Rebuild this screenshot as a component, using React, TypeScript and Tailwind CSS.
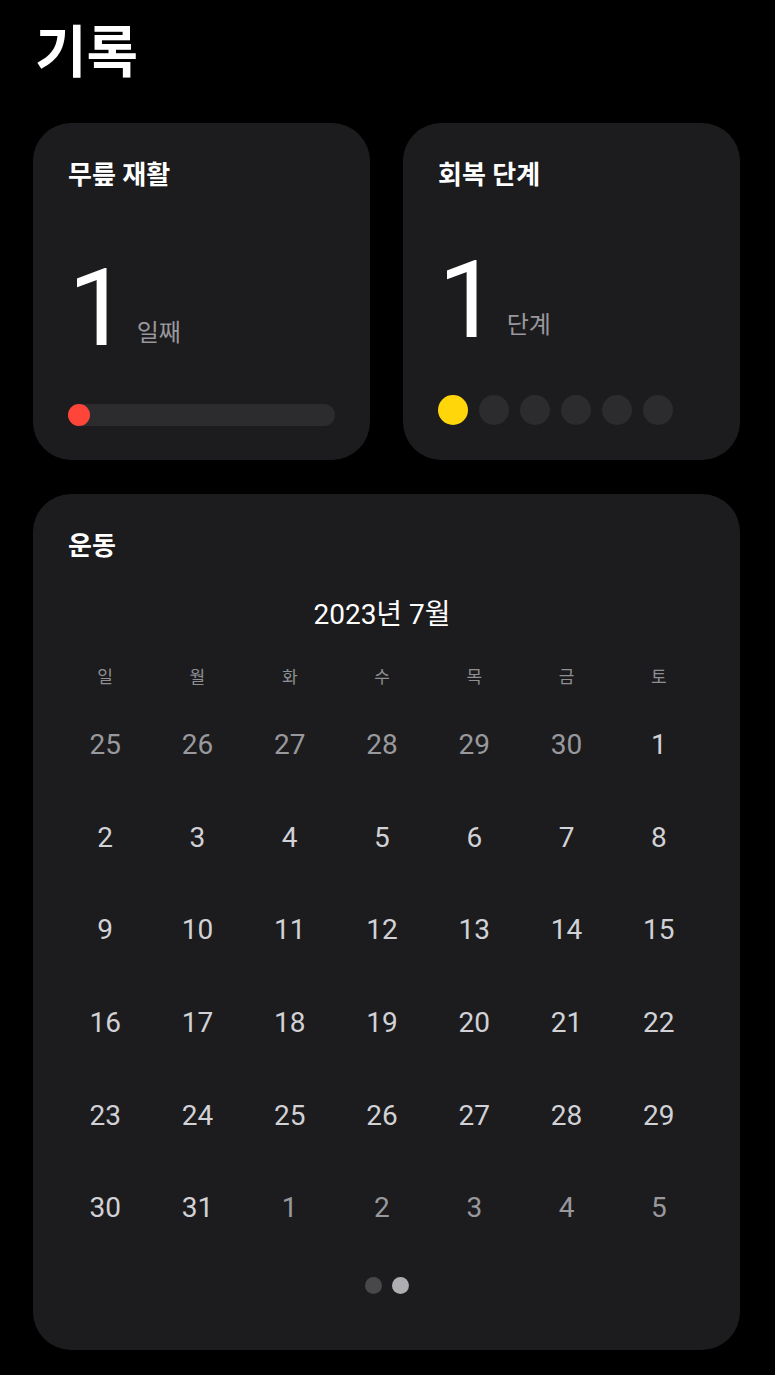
import React from 'react';

const FONT = "font-['Roboto','Noto_Sans_CJK_KR',sans-serif]";

const weekdays = ['일', '월', '화', '수', '목', '금', '토'];

// July 2023, padded with June / August days
const days: { n: number; cur: boolean }[] = [
    ...[25, 26, 27, 28, 29, 30].map(n => ({ n, cur: false })),
    ...Array.from({ length: 31 }, (_, i) => ({ n: i + 1, cur: true })),
    ...[1, 2, 3, 4, 5].map(n => ({ n, cur: false })),
];

function StatCard({ title, value, unit, valueGap, children }: {
    title: string;
    value: string;
    unit: string;
    valueGap: string;
    children: React.ReactNode;
}) {
    return (
        <div className="w-[337px] h-[337px] rounded-[38px] bg-[#1c1c1e] px-[35px] pt-[37px] flex flex-col">
            <div className="text-[26px] leading-[31px] font-bold text-white">{title}</div>
            <div className={`flex items-baseline ${valueGap}`}>
                <span className="text-[108px] leading-none font-normal text-white">{value}</span>
                <span className="relative -top-[4px] ml-[8px] text-[24px] text-[#98989d]">{unit}</span>
            </div>
            {children}
        </div>
    );
}

export default function App() {
    return (
        <div className={`w-[775px] min-h-[1375px] bg-black pl-[33px] pr-[35px] ${FONT}`}>
            <h1 className="pt-[25px] pl-[2px] text-[56px] leading-none font-bold text-white">기록</h1>

            <div className="mt-[42px] flex gap-[33px]">
                <StatCard title="무릎 재활" value="1" unit="일째" valueGap="mt-[63px]">
                    <div className="mt-[42px] h-[22px] rounded-full bg-[#2c2c2e]">
                        <div className="w-[22px] h-[22px] rounded-full bg-[#ff453a]" />
                    </div>
                </StatCard>
                <StatCard title="회복 단계" value="1" unit="단계" valueGap="mt-[55px]">
                    <div className="mt-[41px] flex gap-[11px]">
                        {[0, 1, 2, 3, 4, 5].map(i => (
                            <div
                                key={i}
                                className={i === 0 ? 'w-[30px] h-[30px] rounded-full bg-[#ffd60a]' : 'w-[30px] h-[30px] rounded-full bg-[#2c2c2e]'}
                            />
                        ))}
                    </div>
                </StatCard>
            </div>

            <div className="mt-[34px] rounded-[38px] bg-[#1c1c1e] pt-[37px] pb-[56px]">
                <div className="px-[35px] text-[26px] leading-[31px] font-bold text-white">운동</div>

                <div className="pl-[26px] pr-[35px]">
                    <div className="mt-[33px] h-[40px] flex items-center justify-center text-[28px] text-white">
                        2023년 7월
                    </div>

                    <div className="mt-[22px] grid grid-cols-7">
                        {weekdays.map(d => (
                            <div key={d} className="h-[42px] flex items-center justify-center text-[17px] text-[#8e8e93]">
                                {d}
                            </div>
                        ))}
                        {days.map((d, i) => (
                            <div
                                key={i}
                                className={d.cur
                                    ? 'h-[92.6px] flex items-center justify-center text-[28px] text-[#d1d1d6]'
                                    : 'h-[92.6px] flex items-center justify-center text-[28px] text-[#98989d]'}
                            >
                                {d.n}
                            </div>
                        ))}
                    </div>
                </div>

                <div className="mt-[22px] flex justify-center gap-[10px]">
                    <div className="w-[17px] h-[17px] rounded-full bg-[#48484a]" />
                    <div className="w-[17px] h-[17px] rounded-full bg-[#aeaeb2]" />
                </div>
            </div>
        </div>
    );
}
